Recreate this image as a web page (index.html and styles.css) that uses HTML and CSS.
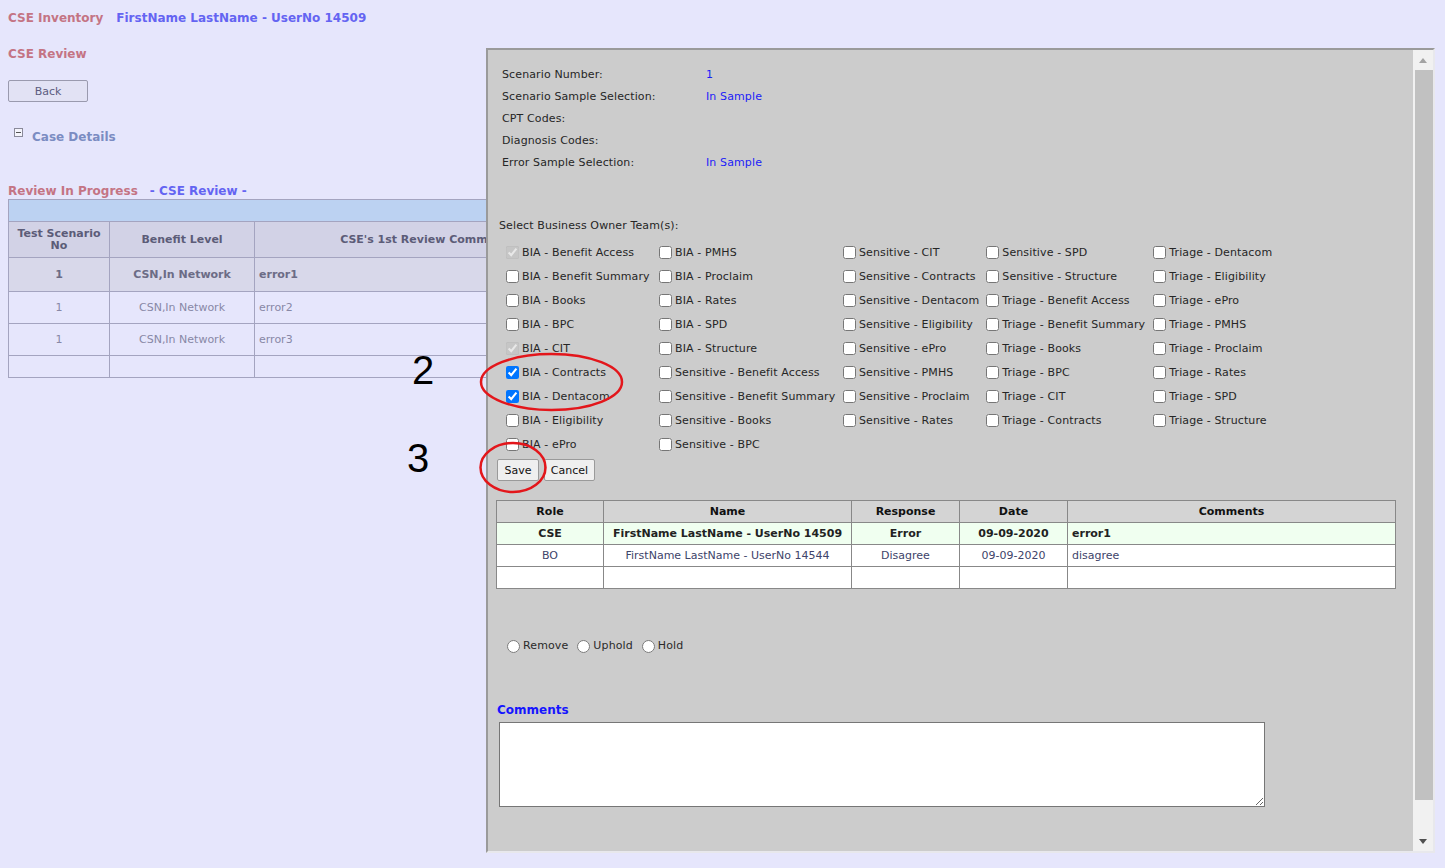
FILE: index.html
```html
<!DOCTYPE html>
<html>
<head>
<meta charset="utf-8">
<title>CSE Inventory</title>
<link rel="stylesheet" href="styles.css">
</head>
<body>
<div class="page">
  <div class="topbar"><span class="app">CSE Inventory</span><span class="user">FirstName LastName - UserNo 14509</span></div>
  <div class="sect">CSE Review</div>
  <button class="back">Back</button>
  <div class="case"><span class="toggle"></span><span class="case-t">Case Details</span></div>
  <div class="rip"><span class="rose">Review In Progress</span><span class="blue">- CSE Review -</span></div>
  <table class="ltable">
    <tr class="lbar"><td colspan="4"></td></tr>
    <tr class="lhead"><th class="c1">Test Scenario No</th><th class="c2">Benefit Level</th><th class="c3">CSE's 1st Review Comments</th><th class="c4">BO Response</th></tr>
    <tr class="lrow first"><td class="ctr">1</td><td class="ctr">CSN,In Network</td><td>error1</td><td></td></tr>
    <tr class="lrow"><td class="ctr">1</td><td class="ctr">CSN,In Network</td><td>error2</td><td></td></tr>
    <tr class="lrow"><td class="ctr">1</td><td class="ctr">CSN,In Network</td><td>error3</td><td></td></tr>
    <tr class="lrow empty"><td></td><td></td><td></td><td></td></tr>
  </table>
</div>

<div class="modal">
  <div class="mcontent">
    <table class="info">
      <tr><td class="lab">Scenario Number:</td><td class="val">1</td></tr>
      <tr><td class="lab">Scenario Sample Selection:</td><td class="val">In Sample</td></tr>
      <tr><td class="lab">CPT Codes:</td><td class="val"></td></tr>
      <tr><td class="lab">Diagnosis Codes:</td><td class="val"></td></tr>
      <tr><td class="lab">Error Sample Selection:</td><td class="val">In Sample</td></tr>
    </table>
    <div class="selhead">Select Business Owner Team(s):</div>
    <table class="teams">
      <tr>
        <td class="k1"><label><input type="checkbox" checked disabled>BIA - Benefit Access</label></td>
        <td class="k2"><label><input type="checkbox">BIA - PMHS</label></td>
        <td class="k3"><label><input type="checkbox">Sensitive - CIT</label></td>
        <td class="k4"><label><input type="checkbox">Sensitive - SPD</label></td>
        <td><label><input type="checkbox">Triage - Dentacom</label></td>
      </tr>
      <tr>
        <td><label><input type="checkbox">BIA - Benefit Summary</label></td>
        <td><label><input type="checkbox">BIA - Proclaim</label></td>
        <td><label><input type="checkbox">Sensitive - Contracts</label></td>
        <td><label><input type="checkbox">Sensitive - Structure</label></td>
        <td><label><input type="checkbox">Triage - Eligibility</label></td>
      </tr>
      <tr>
        <td><label><input type="checkbox">BIA - Books</label></td>
        <td><label><input type="checkbox">BIA - Rates</label></td>
        <td><label><input type="checkbox">Sensitive - Dentacom</label></td>
        <td><label><input type="checkbox">Triage - Benefit Access</label></td>
        <td><label><input type="checkbox">Triage - ePro</label></td>
      </tr>
      <tr>
        <td><label><input type="checkbox">BIA - BPC</label></td>
        <td><label><input type="checkbox">BIA - SPD</label></td>
        <td><label><input type="checkbox">Sensitive - Eligibility</label></td>
        <td><label><input type="checkbox">Triage - Benefit Summary</label></td>
        <td><label><input type="checkbox">Triage - PMHS</label></td>
      </tr>
      <tr>
        <td><label><input type="checkbox" checked disabled>BIA - CIT</label></td>
        <td><label><input type="checkbox">BIA - Structure</label></td>
        <td><label><input type="checkbox">Sensitive - ePro</label></td>
        <td><label><input type="checkbox">Triage - Books</label></td>
        <td><label><input type="checkbox">Triage - Proclaim</label></td>
      </tr>
      <tr>
        <td><label><input type="checkbox" checked>BIA - Contracts</label></td>
        <td><label><input type="checkbox">Sensitive - Benefit Access</label></td>
        <td><label><input type="checkbox">Sensitive - PMHS</label></td>
        <td><label><input type="checkbox">Triage - BPC</label></td>
        <td><label><input type="checkbox">Triage - Rates</label></td>
      </tr>
      <tr>
        <td><label><input type="checkbox" checked>BIA - Dentacom</label></td>
        <td><label><input type="checkbox">Sensitive - Benefit Summary</label></td>
        <td><label><input type="checkbox">Sensitive - Proclaim</label></td>
        <td><label><input type="checkbox">Triage - CIT</label></td>
        <td><label><input type="checkbox">Triage - SPD</label></td>
      </tr>
      <tr>
        <td><label><input type="checkbox">BIA - Eligibility</label></td>
        <td><label><input type="checkbox">Sensitive - Books</label></td>
        <td><label><input type="checkbox">Sensitive - Rates</label></td>
        <td><label><input type="checkbox">Triage - Contracts</label></td>
        <td><label><input type="checkbox">Triage - Structure</label></td>
      </tr>
      <tr>
        <td><label><input type="checkbox">BIA - ePro</label></td>
        <td><label><input type="checkbox">Sensitive - BPC</label></td>
        <td></td><td></td><td></td>
      </tr>
    </table>
    <div class="btns"><button class="btn save">Save</button><button class="btn cancel">Cancel</button></div>
    <table class="resp">
      <tr class="rh"><th class="r1">Role</th><th class="r2">Name</th><th class="r3">Response</th><th class="r4">Date</th><th class="r5">Comments</th></tr>
      <tr class="rcse"><td class="ctr">CSE</td><td class="ctr">FirstName LastName - UserNo 14509</td><td class="ctr">Error</td><td class="ctr">09-09-2020</td><td>error1</td></tr>
      <tr class="rbo"><td class="ctr">BO</td><td class="ctr">FirstName LastName - UserNo 14544</td><td class="ctr">Disagree</td><td class="ctr">09-09-2020</td><td>disagree</td></tr>
      <tr class="rbo"><td></td><td></td><td></td><td></td><td></td></tr>
    </table>
    <div class="radios">
      <label><input type="radio" name="dec">Remove</label>
      <label><input type="radio" name="dec">Uphold</label>
      <label><input type="radio" name="dec">Hold</label>
    </div>
    <div class="chead">Comments</div>
    <textarea class="cbox"></textarea>
  </div>
  <div class="scroll">
    <div class="arrow up"></div>
    <div class="track"><div class="thumb"></div></div>
    <div class="arrow down"></div>
  </div>
</div>

<div class="annot n2">2</div>
<div class="annot n3">3</div>
<svg class="marks" width="1445" height="868" viewBox="0 0 1445 868">
  <ellipse cx="551.5" cy="382" rx="70.5" ry="28" fill="none" stroke="#e3161b" stroke-width="2.5"/>
  <ellipse cx="513" cy="467.5" rx="32.5" ry="24.5" fill="none" stroke="#e3161b" stroke-width="2.5"/>
</svg>
</body>
</html>
```

FILE: styles.css
```css
html, body {
  margin: 0;
  padding: 0;
}
body {
  background: #e6e6fc;
  font-family: "DejaVu Sans", Verdana, sans-serif;
  font-size: 11px;
  color: #222;
  width: 1445px;
  height: 868px;
  overflow: hidden;
  position: relative;
}
.page {
  padding: 9px 8px 8px 8px;
}
.topbar {
  line-height: 18px;
  font-size: 12px;
  font-weight: bold;
}
.app { color: #c47484; margin-right: 13px; }
.user { color: #6464f2; }
.sect {
  margin-top: 18px;
  line-height: 18px;
  font-size: 12px;
  font-weight: bold;
  color: #c47484;
}
.back {
  display: block;
  margin-top: 17px;
  width: 80px;
  height: 22px;
  background: #e2e2f4;
  border: 1px solid #9a9aae;
  border-radius: 2px;
  font-family: "DejaVu Sans", Verdana, sans-serif;
  font-size: 11px;
  color: #5c5c80;
  padding: 0;
}
.case {
  margin-top: 26px;
  line-height: 18px;
  display: flex;
  align-items: center;
  padding-left: 6px;
}
.toggle {
  width: 7px;
  height: 7px;
  border: 1px solid #8a8a9a;
  position: relative;
  margin-top: -9px;
  margin-right: 9px;
  background: #f4f4fc;
}
.toggle::after {
  content: "";
  position: absolute;
  left: 1px;
  right: 1px;
  top: 3px;
  height: 1px;
  background: #555;
}
.case-t {
  font-size: 12px;
  font-weight: bold;
  color: #7b8cc2;
}
.rip {
  margin-top: 36px;
  margin-bottom: -1px;
  line-height: 18px;
  font-size: 12px;
  font-weight: bold;
}
.rose { color: #c47484; margin-right: 12px; }
.blue { color: #6464f2; }
.ltable {
  border-collapse: collapse;
  width: 992px;
  font-size: 11px;
}
.ltable td, .ltable th {
  border: 1px solid #a4a4c0;
  padding: 0 4px;
}
.lbar td {
  height: 21px;
  background: #bcd2f2;
  padding: 0;
}
.lhead th {
  height: 35px;
  background: #d2d2e6;
  color: #5c5c78;
  font-weight: bold;
  line-height: 12px;
}
.c1 { width: 92px; }
.c2 { width: 136px; }
.c3 { width: 337px; }
.lrow td {
  height: 31px;
  color: #8888a6;
}
.lrow.first td {
  height: 33px;
  background: #d8d8ea;
  color: #6c6c86;
  font-weight: bold;
}
.lrow.empty td { height: 21px; }
.ctr { text-align: center; }

.modal {
  position: absolute;
  left: 486px;
  top: 48px;
  width: 945px;
  height: 801px;
  border-style: solid;
  border-width: 2px 2px 2px 2px;
  border-color: #9a9a9a #e8e8ec #e8e8ec #9a9a9a;
  background: #cccccc;
  display: flex;
  letter-spacing: 0.12px;
}
.mcontent {
  flex: 1;
  padding-top: 13px;
  color: #262626;
}
.info {
  border-collapse: collapse;
  margin-left: 11px;
}
.info td {
  height: 22px;
  padding: 0 3px;
}
.info .lab { width: 198px; }
.info .val { color: #1c1cf8; }
.selhead {
  margin-top: 44px;
  margin-left: 11px;
  line-height: 18px;
}
.teams {
  border-collapse: collapse;
  margin-left: 11px;
  margin-top: 5px;
}
.teams td {
  height: 24px;
  padding: 0 0 0 3px;
  white-space: nowrap;
  vertical-align: middle;
}
.teams .k1 { width: 150px; }
.teams .k2 { width: 181px; }
.teams .k3 { width: 140px; }
.teams .k4 { width: 164px; }
.teams label {
  display: flex;
  align-items: center;
}
.teams input {
  width: 13px;
  height: 13px;
  margin: 0 3px 0 4px;
}
.btns {
  margin-top: 3px;
  margin-left: 9px;
  display: flex;
  gap: 5px;
}
.btn {
  height: 22px;
  padding: 0;
  background: #efefef;
  border: 1px solid #9a9a9a;
  border-radius: 2px;
  font-family: "DejaVu Sans", Verdana, sans-serif;
  font-size: 11px;
  color: #111;
}
.save { width: 42px; }
.cancel { width: 51px; }
.resp {
  margin-top: 19px;
  margin-left: 8px;
  border-collapse: collapse;
  width: 900px;
  letter-spacing: 0;
}
.resp td, .resp th {
  border: 1px solid #888;
  height: 21px;
  padding: 0 4px;
}
.rh th {
  background: #d4d4d4;
  color: #111;
  font-weight: bold;
}
.r1 { width: 98px; }
.r2 { width: 239px; }
.r3 { width: 99px; }
.r4 { width: 99px; }
.rcse td {
  background: #f0fff0;
  font-weight: bold;
  color: #222;
}
.rbo td {
  background: #fff;
  color: #40446a;
}
.radios {
  margin-top: 48px;
  margin-left: 14px;
  line-height: 18px;
  display: flex;
  align-items: center;
}
.radios label {
  display: flex;
  align-items: center;
  margin-right: 4px;
  color: #2a2a2a;
}
.radios input {
  width: 13px;
  height: 13px;
  margin: 0 3px 0 5px;
}
.chead {
  margin-top: 46px;
  margin-left: 9px;
  line-height: 18px;
  font-size: 12px;
  font-weight: bold;
  color: #1515ff;
  letter-spacing: 0;
}
.cbox {
  display: block;
  margin-top: 3px;
  margin-left: 11px;
  width: 766px;
  height: 85px;
  box-sizing: border-box;
  border: 1px solid #767676;
  background: #fff;
  padding: 2px;
}
.scroll {
  width: 20px;
  background: #f1f1f1;
  display: flex;
  flex-direction: column;
}
.arrow {
  height: 20px;
  position: relative;
}
.arrow::after {
  content: "";
  position: absolute;
  left: 6px;
  width: 0;
  height: 0;
  border-left: 4px solid transparent;
  border-right: 4px solid transparent;
}
.arrow.up::after {
  top: 8px;
  border-bottom: 5px solid #a3a3a3;
}
.arrow.down::after {
  top: 8px;
  border-top: 5px solid #505050;
}
.track {
  flex: 1;
  padding: 0 0 0 2px;
}
.thumb {
  height: 730px;
  background: #c1c1c1;
}
.annot {
  position: absolute;
  font-family: "Liberation Sans", Arial, sans-serif;
  font-size: 40px;
  line-height: 40px;
  color: #000;
}
.n2 { left: 412px; top: 350px; }
.n3 { left: 407px; top: 438px; }
.marks {
  position: absolute;
  left: 0;
  top: 0;
  pointer-events: none;
}
```
